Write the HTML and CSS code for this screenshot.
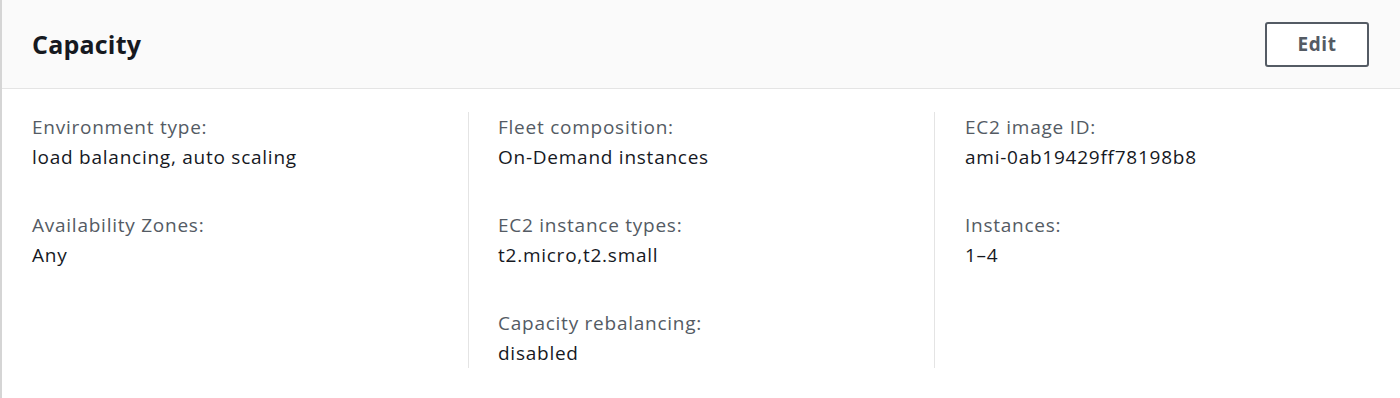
FILE: index.html
```html
<!DOCTYPE html>
<html lang="en">
<head>
<meta charset="utf-8">
<title>Capacity</title>
<link rel="stylesheet" href="styles.css">
</head>
<body>
<section class="panel">
  <header class="panel-header">
    <h2 class="panel-title">Capacity</h2>
    <button class="btn">Edit</button>
  </header>
  <div class="panel-body">
    <div class="col">
      <div class="field">
        <div class="label">Environment type:</div>
        <div class="value">load balancing, auto scaling</div>
      </div>
      <div class="field">
        <div class="label">Availability Zones:</div>
        <div class="value">Any</div>
      </div>
    </div>
    <div class="col">
      <div class="field">
        <div class="label">Fleet composition:</div>
        <div class="value">On-Demand instances</div>
      </div>
      <div class="field">
        <div class="label">EC2 instance types:</div>
        <div class="value">t2.micro,t2.small</div>
      </div>
      <div class="field">
        <div class="label">Capacity rebalancing:</div>
        <div class="value">disabled</div>
      </div>
    </div>
    <div class="col">
      <div class="field">
        <div class="label">EC2 image ID:</div>
        <div class="value">ami-0ab19429ff78198b8</div>
      </div>
      <div class="field">
        <div class="label">Instances:</div>
        <div class="value">1–4</div>
      </div>
    </div>
  </div>
</section>
</body>
</html>
```

FILE: styles.css
```css
* { box-sizing: border-box; }
html, body { margin: 0; padding: 0; background: #ffffff; }
body {
  font-family: "Open Sans", "Noto Sans", sans-serif;
  color: #16191f;
}
.panel {
  border-left: 2px solid #d5d5d5;
  min-height: 398px;
  background: #fff;
}
.panel-header {
  height: 89px;
  background: #fafafa;
  border-bottom: 1px solid #e4e4e4;
  display: flex;
  align-items: center;
  justify-content: space-between;
  padding: 0 31px 0 30px;
}
.panel-title {
  margin: 0;
  font-size: 25px;
  font-weight: 700;
  color: #16191f;
  letter-spacing: 0.2px;
}
.btn {
  width: 104px;
  height: 45px;
  border: 2px solid #545b64;
  border-radius: 3px;
  background: #fff;
  color: #545b64;
  font-family: inherit;
  font-size: 19px;
  font-weight: 700;
  letter-spacing: 0.6px;
  padding: 0;
}
.panel-body {
  display: grid;
  grid-template-columns: 1fr 1fr 1fr;
  padding-top: 23px;
}
.col {
  padding-left: 30px;
  display: flex;
  flex-direction: column;
  gap: 38px;
}
.col + .col { border-left: 1px solid #e4e4e4; }
.col:nth-child(2) { padding-left: 29px; }
.label, .value {
  font-size: 19px;
  line-height: 30px;
  letter-spacing: 0.75px;
}
.label { color: #545b64; }
.value { color: #16191f; }
```
